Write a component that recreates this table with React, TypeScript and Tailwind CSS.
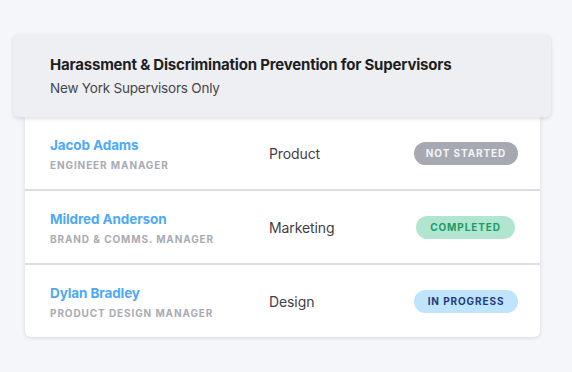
import React from "react";

const rows = [
    {
        name: "Jacob Adams",
        role: "ENGINEER MANAGER",
        dept: "Product",
        status: "NOT STARTED",
        badge: "bg-[#a6a9b2] text-[#f3f4f7] w-[104px]",
    },
    {
        name: "Mildred Anderson",
        role: "BRAND & COMMS. MANAGER",
        dept: "Marketing",
        status: "COMPLETED",
        badge: "bg-[#b2e5cf] text-[#1c9a67] w-[99px] mr-[3px]",
    },
    {
        name: "Dylan Bradley",
        role: "PRODUCT DESIGN MANAGER",
        dept: "Design",
        status: "IN PROGRESS",
        badge: "bg-[#bfe4fc] text-[#1f3c7e] w-[104px]",
    },
];

const App = () => {
    return (
        <div className="w-[572px] h-[372px] bg-[#f5f6fa] pt-[34px] font-['Inter',sans-serif]">
            <div className="relative z-10 ml-[13px] mr-[21px] h-[83px] rounded-[6px] bg-[#eeeff3] shadow-[0_2px_4px_rgba(0,0,0,0.12)] pl-[37px] pt-[21px]">
                <h1 className="text-[15px] font-bold text-[#1d1e22] tracking-[-0.2px] leading-[20px]">
                    Harassment &amp; Discrimination Prevention for Supervisors
                </h1>
                <p className="mt-[4px] text-[13.5px] text-[#45464c] tracking-[-0.2px] leading-[18px]">
                    New York Supervisors Only
                </p>
            </div>

            <div className="ml-[25px] mr-[32px] rounded-b-[6px] bg-white shadow-[0_1px_4px_rgba(0,0,0,0.12)]">
                {rows.map((r, i) => (
                    <div
                        key={r.name}
                        className={
                            "flex items-center pl-[25px] pr-[22px] " +
                            (i < rows.length - 1 ? "h-[74px] border-b-2 border-[#dcdde2]" : "h-[72px]")
                        }
                    >
                        <div className="w-[219px] pt-[2px]">
                            <div className="text-[13.5px] font-bold text-[#4ea9f6] tracking-[-0.1px] leading-[18px]">
                                {r.name}
                            </div>
                            <div className="mt-[4px] text-[10px] font-bold text-[#a9abb3] tracking-[0.9px] leading-[14px]">
                                {r.role}
                            </div>
                        </div>
                        <div className="flex-1 pt-[1px] text-[14px] text-[#3f4046] tracking-[-0.1px]">{r.dept}</div>
                        <div
                            className={
                                "h-[23px] rounded-full flex items-center justify-center text-[10px] font-bold tracking-[0.9px] " +
                                r.badge
                            }
                        >
                            {r.status}
                        </div>
                    </div>
                ))}
            </div>
        </div>
    );
};

export default App;
